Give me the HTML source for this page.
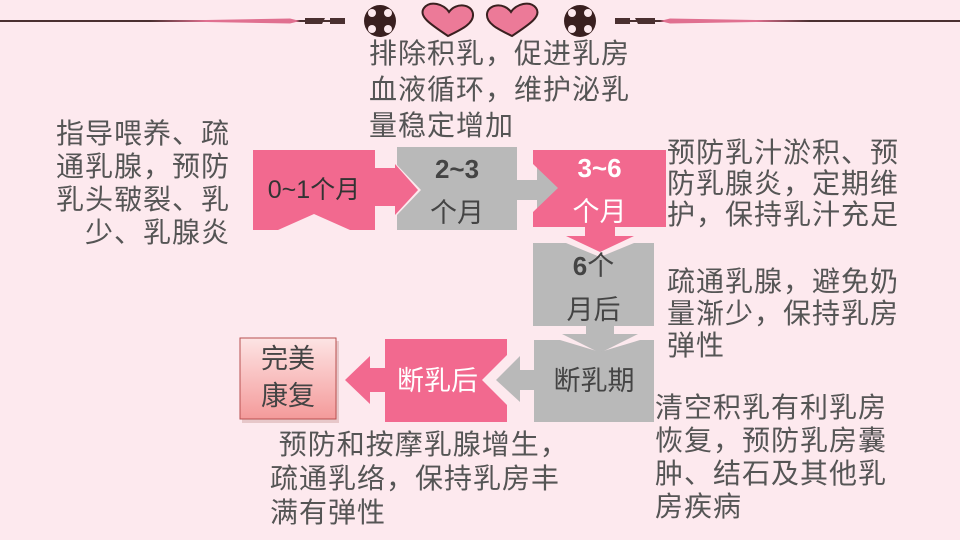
<!DOCTYPE html>
<html><head><meta charset="utf-8"><style>
html,body{margin:0;padding:0}
body{width:960px;height:540px;background:#fde9ee;position:relative;overflow:hidden;font-family:"Liberation Sans","Noto Sans CJK SC",sans-serif;color:#555}
.t{position:absolute;font-size:28px;line-height:32px;white-space:nowrap;letter-spacing:1px}
.b{position:absolute;text-align:center;font-size:27px;line-height:40px;color:#333}
</style></head><body>
<svg width="960" height="540" style="position:absolute;left:0;top:0">
<rect x="0" y="20" width="345" height="2" fill="#4a3030"/>
<rect x="615" y="20" width="345" height="2" fill="#4a3030"/>
<path d="M150 21 L290 18.5 L300 21 L290 23.5 Z" fill="#e07090"/>
<path d="M810 21 L670 18.5 L660 21 L670 23.5 Z" fill="#e07090"/>
<path d="M305 18 H325 L322 24 H305Z M330 18 H345 V24 H330Z" fill="#4a3030"/>
<path d="M655 18 H635 L638 24 H655Z M630 18 H615 V24 H630Z" fill="#4a3030"/>
<g fill="#3a2020">
<circle cx="380" cy="21" r="16"/><circle cx="580" cy="21" r="16"/>
</g>
<g fill="#fde9ee">
<circle cx="372" cy="13" r="4"/><circle cx="388" cy="13" r="4"/><circle cx="372" cy="29" r="4"/><circle cx="388" cy="29" r="4"/>
<circle cx="572" cy="13" r="4"/><circle cx="588" cy="13" r="4"/><circle cx="572" cy="29" r="4"/><circle cx="588" cy="29" r="4"/>
</g>
<path d="M448 36 C430 24 418 16 424 8 C430 0 444 4 449 12 C456 2 472 4 473 14 C474 24 460 30 448 36Z" fill="#ec7a98" stroke="#3a2020" stroke-width="2"/>
<path d="M512 36 C500 30 486 24 487 14 C488 4 504 2 511 12 C516 4 530 0 536 8 C542 16 530 24 512 36Z" fill="#ec7a98" stroke="#3a2020" stroke-width="2"/>
<path d="M253 150 H375 V230 H350 L314 214 L278 230 H253Z" fill="#f2698f"/>
<path d="M375 168 H395 V164 L418 190 L395 215 V206 H375Z" fill="#f2698f"/>
<path d="M397 147 H517 V230 H397 V215 L421 190 L397 165Z" fill="#b9b9b9"/>
<path d="M517 180 H537 V166 L563 188 L537 210 V200 H517Z" fill="#b9b9b9"/>
<path d="M533 150 H666 V227 H533 V212 L558 188 L533 164Z" fill="#f2698f"/>
<path d="M585 227 H615 V236 H634 L600 252 L566 236 H585Z" fill="#f2698f"/>
<path d="M533 243 H654 V326 H533Z M566 243 L600 257 L634 243Z" fill="#b9b9b9" fill-rule="evenodd"/>
<path d="M586 326 H614 V334 H638 L600 353 L562 334 H586Z" fill="#b9b9b9"/>
<path d="M534 340 H560 L600 352 L640 340 H654 V422 H534Z" fill="#b9b9b9"/>
<path d="M534 370 H520 V356 L496 380 L520 402 V390 H534Z" fill="#b9b9b9"/>
<path d="M385 339 H507 V355 L482 380 L507 405 V422 H385Z" fill="#f2698f"/>
<path d="M385 368 H370 V356 L345 380 L370 404 V392 H385Z" fill="#f2698f"/>
<defs><linearGradient id="g" x1="0" y1="0" x2="0" y2="1"><stop offset="0" stop-color="#fde4e4"/><stop offset="1" stop-color="#f49a9a"/></linearGradient></defs>
<rect x="242" y="341" width="97" height="82" fill="#d8b0b0" opacity=".6"/>
<rect x="240" y="338" width="96" height="81" fill="url(#g)" stroke="#b85050" stroke-width="1"/>
</svg>
<div class="b" style="left:253px;top:170px;width:122px;font-size:25px">0~1个月</div>
<div class="b" style="left:397px;top:147px;width:120px;line-height:44px;color:#444"><b style="font-size:26px">2~3</b><br>个月</div>
<div class="b" style="left:533px;top:146px;width:133px;line-height:44px;color:#fff"><b style="font-size:26px">3~6</b><br>个月</div>
<div class="b" style="left:533px;top:244px;width:121px;line-height:44px;color:#444"><b style="font-size:26px">6</b>个<br>月后</div>
<div class="b" style="left:534px;top:361px;width:120px;color:#444">断乳期</div>
<div class="b" style="left:385px;top:361px;width:105px;color:#fff">断乳后</div>
<div class="b" style="left:240px;top:341px;width:96px;line-height:37px;color:#444">完美<br>康复</div>
<div class="t" style="left:369px;top:36px;line-height:36px">排除积乳，促进乳房<br>血液循环，维护泌乳<br>量稳定增加</div>
<div class="t" style="left:56px;top:117px;text-align:right;line-height:33px">指导喂养、疏<br>通乳腺，预防<br>乳头皲裂、乳<br>少、乳腺炎</div>
<div class="t" style="left:667px;top:137px;line-height:31px">预防乳汁淤积、预<br>防乳腺炎，定期维<br>护，保持乳汁充足</div>
<div class="t" style="left:667px;top:266px">疏通乳腺，避免奶<br>量渐少，保持乳房<br>弹性</div>
<div class="t" style="left:655px;top:391px;line-height:33px">清空积乳有利乳房<br>恢复，预防乳房囊<br>肿、结石及其他乳<br>房疾病</div>
<div class="t" style="left:270px;top:428px;line-height:34px">&nbsp;预防和按摩乳腺增生，<br>疏通乳络，保持乳房丰<br>满有弹性</div>
</body></html>
